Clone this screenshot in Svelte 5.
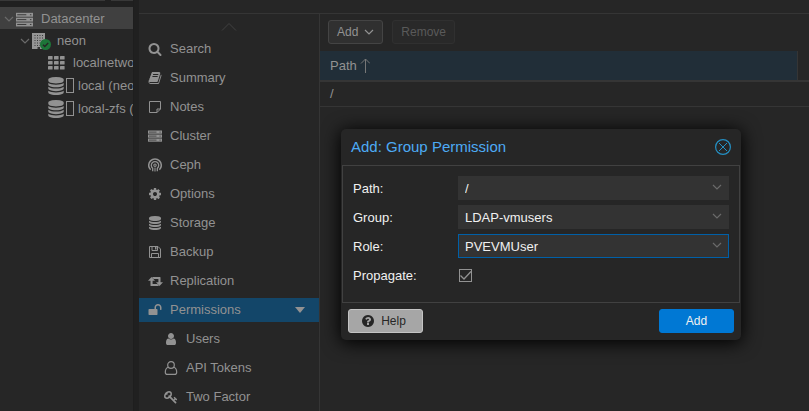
<script>
  const DB =
    'M896 768q237 0 443-43t325-127v170q0 69-103 128t-280 93.5-385 34.5-385-34.5-280-93.5-103-128v-170q119 84 325 127t443 43zm0 768q237 0 443-43t325-127v170q0 69-103 128t-280 93.5-385 34.5-385-34.5-280-93.5-103-128v-170q119 84 325 127t443 43zm0-384q237 0 443-43t325-127v170q0 69-103 128t-280 93.5-385 34.5-385-34.5-280-93.5-103-128v-170q119 84 325 127t443 43zm0-1152q208 0 385 34.5t280 93.5 103 128v128q0 69-103 128t-280 93.5-385 34.5-385-34.5-280-93.5-103-128v-128q0-69 103-128t280-93.5 385-34.5z';

  const solid = {
    search:
      'M1216 832q0-185-131.5-316.5t-316.5-131.5-316.5 131.5-131.5 316.5 131.5 316.5 316.5 131.5 316.5-131.5 131.5-316.5zm512 832q0 52-38 90t-90 38q-54 0-90-38l-343-342q-179 124-399 124-143 0-273.5-55.5t-225-150-150-225-55.5-273.5 55.5-273.5 150-225 225-150 273.5-55.5 273.5 55.5 225 150 150 225 55.5 273.5q0 220-124 399l343 343q37 37 37 90z',
    book:
      'M1703 478q40 57 18 129l-275 906q-19 64-76.5 107.5t-122.5 43.5h-923q-77 0-148.5-53.5t-99.5-131.5q-24-67-2-127 0-4 3-27t4-37q1-8-3-21.5t-3-19.5q2-11 8-21t16.5-23.5 16.5-23.5q23-38 45-91.5t30-91.5q3-10 .5-30t-.5-28q3-11 17-28t17-23q21-36 42-92t25-90q1-9-2.5-32t.5-28q4-13 22-30.5t22-22.5q19-26 42.5-84.5t27.5-96.5q1-8-3-25.5t-2-26.5q2-8 9-18t18-23 17-21q8-12 16.5-30.5t15-35 16-36 19.5-32 26.5-23.5 36-11.5 47.5 5.5l-1 3q38-9 51-9h761q74 0 114 56t18 130l-274 906q-36 119-71.5 153.5t-128.5 34.5h-869q-27 0-38 15-11 16-1 43 24 70 144 70h923q29 0 56-15.5t35-41.5l300-987q7-22 5-57 38 15 59 43zm-1064 2q-4 13 2 22.5t20 9.5h608q13 0 25.5-9.5t16.5-22.5l21-64q4-13-2-22.5t-20-9.5h-608q-13 0-25.5 9.5t-16.5 22.5zm-83 256q-4 13 2 22.5t20 9.5h608q13 0 25.5-9.5t16.5-22.5l21-64q4-13-2-22.5t-20-9.5h-608q-13 0-25.5 9.5t-16.5 22.5z',
    cog:
      'M1152 896q0-106-75-181t-181-75-181 75-75 181 75 181 181 75 181-75 75-181zm512-109v222q0 12-8 23t-20 13l-185 28q-19 54-39 91 35 50 107 138 10 12 10 25t-9 23q-27 37-99 108t-94 71q-12 0-26-9l-138-108q-44 23-91 38-16 136-29 186-7 28-36 28h-222q-14 0-24.5-8.5t-11.5-21.5l-28-184q-49-16-90-37l-141 107q-10 9-25 9-14 0-25-11-126-114-165-168-7-10-7-23 0-12 8-23 15-21 51-66.5t54-70.5q-27-50-41-99l-183-27q-13-2-21-12.5t-8-23.5v-222q0-12 8-23t19-13l186-28q14-46 39-92-40-57-107-138-10-12-10-24 0-10 9-23 26-36 98.5-107.5t94.5-71.5q13 0 26 10l138 107q44-23 91-38 16-136 29-186 7-28 36-28h222q14 0 24.5 8.500t11.500 21.500l28 184q49 16 90 37l142-107q9-9 24-9 13 0 25 10 129 119 165 170 7 8 7 22 0 12-8 23-15 21-51 66.500t-54 70.500q26 50 41 98l183 28q13 2 21 12.500t8 23.500z',
    database: DB,
    unlock:
      'M1728 576v256q0 26-19 45t-45 19h-64q-26 0-45-19t-19-45v-256q0-106-75-181t-181-75-181 75-75 181v192h96q40 0 68 28t28 68v576q0 40-28 68t-68 28h-960q-40 0-68-28t-28-68v-576q0-40 28-68t68-28h672v-192q0-185 131.5-316.5t316.5-131.5 316.5 131.5 131.5 316.5z',
    user:
      'M1536 1399q0 109-62.5 187t-150.5 78h-854q-88 0-150.5-78t-62.5-187q0-85 8.5-160.5t31.5-152 58.5-131 94-89 134.5-34.5q131 128 313 128t313-128q76 0 134.5 34.5t94 89 58.5 131 31.5 152 8.5 160.5zm-256-887q0 159-112.5 271.5t-271.5 112.5-271.5-112.5-112.5-271.5 112.5-271.5 271.5-112.5 271.5 112.5 112.5 271.5z',
    key:
      'M832 512q0-80-56-136t-136-56-136 56-56 136q0 42 19 83-41-19-83-19-80 0-136 56t-56 136 56 136 136 56 136-56 56-136q0-42-19-83 41 19 83 19 80 0 136-56t56-136zm851 704q0 17-49 66t-66 49q-9 0-28.5-16t-36.5-33-38.5-40-24.5-26l-96 96 220 220q28 28 28 68 0 42-39 81t-81 39q-40 0-68-28l-671-671q-176 131-365 131-163 0-265.5-102.5t-102.5-265.5q0-160 95-313t248-248 313-95q163 0 265.5 102.5t102.5 265.5q0 189-131 365l355 355 96-96q-3-3-26-24.5t-40-38.5-33-36.5-16-28.5q0-17 49-66t66-49q13 0 23 10 6 6 46 44.5t82 79.5 86.5 86 73 78 28.5 41z',
    help:
      'M1024 1376v-192q0-14-9-23t-23-9h-192q-14 0-23 9t-9 23v192q0 14 9 23t23 9h192q14 0 23-9t9-23zm256-672q0-88-55.5-163t-138.5-116-170-41q-243 0-371 213-15 24 8 42l132 100q7 6 19 6 16 0 25-12 53-68 86-92 34-24 86-24 48 0 85.5 26t37.5 59q0 38-20 61t-68 45q-63 28-115.5 86.5t-52.5 125.5v36q0 14 9 23t23 9h192q14 0 23-9t9-23q0-19 21.5-49.5t54.5-49.5q32-18 49-28.5t46-35 44.5-48 28-60.5 12.5-81zm384 192q0 209-103 385.5t-279.5 279.5-385.5 103-385.5-103-279.5-279.5-103-385.5 103-385.5 279.5-279.5 385.5-103 385.5 103 279.5 279.5 103 385.5z'
  };

  const tree = [
    { label: 'Datacenter', level: 0, icon: 'server', open: true, selected: true },
    { label: 'neon', level: 1, icon: 'node', open: true },
    { label: 'localnetwork', level: 2, icon: 'grid' },
    { label: 'local (neon)', level: 2, icon: 'database', usage: true },
    { label: 'local-zfs (neon)', level: 2, icon: 'database', usage: true }
  ];

  const menu = [
    { label: 'Search', icon: 'search' },
    { label: 'Summary', icon: 'book' },
    { label: 'Notes', icon: 'note' },
    { label: 'Cluster', icon: 'server' },
    { label: 'Ceph', icon: 'ceph' },
    { label: 'Options', icon: 'cog' },
    { label: 'Storage', icon: 'database' },
    { label: 'Backup', icon: 'floppy' },
    { label: 'Replication', icon: 'retweet' },
    { label: 'Permissions', icon: 'unlock', active: true },
    { label: 'Users', icon: 'user', sub: true },
    { label: 'API Tokens', icon: 'userOutline', sub: true },
    { label: 'Two Factor', icon: 'key', sub: true }
  ];

  const fields = [
    { id: 'path', label: 'Path:', value: '/' },
    { id: 'group', label: 'Group:', value: 'LDAP-vmusers' },
    { id: 'role', label: 'Role:', value: 'PVEVMUser', focused: true }
  ];

  let propagate = $state(true);
</script>

{#snippet icon(name, size)}
  {#if solid[name]}
    <svg width={size} height={size} viewBox="0 0 1792 1792" fill="currentColor" aria-hidden="true"><path d={solid[name]} /></svg>
  {:else if name === 'server'}
    <svg width={size} height={size} viewBox="0 0 14 14" aria-hidden="true">
      {#each [1.5, 5.5, 9.5] as y}
        <rect x="0" {y} width="14" height="3.2" fill="currentColor" />
        <path d="M1 {y + 1.6}h7.500M11.500 {y + 1.6}h1.200" stroke="#383838" stroke-width="0.800" />
      {/each}
    </svg>
  {:else if name === 'grid'}
    <svg width={size} height={size} viewBox="0 0 18 18" fill="currentColor" aria-hidden="true">
      {#each [2, 7, 12] as y}
        {#each [1, 7, 13] as x}
          <rect {x} {y} width="4.6" height="3.6" rx=".6" />
        {/each}
      {/each}
    </svg>
  {:else if name === 'node'}
    <svg width={size} height={size} viewBox="0 0 18 18" aria-hidden="true">
      <path d="M1 1h13v16H1z" fill="#959595" />
      <path d="M3.500 3.500h9M3.500 6h9M3.500 8.500h9M3.500 11h9M3.500 13.500h9" stroke="#3a3a3a" stroke-dasharray="1 1.500" />
      <path d="M6.500 15h2.500v2h-2.500z" fill="#333" />
    </svg>
  {:else if name === 'note'}
    <svg width={size} height={size} viewBox="0 0 14 14" fill="none" stroke="currentColor" aria-hidden="true">
      <path d="M1.500 1.500h11v7.500l-3.500 3.500h-7.500zM12.500 9h-3.500v3.500" />
    </svg>
  {:else if name === 'ceph'}
    <svg width={size} height={size} viewBox="0 0 14 14" fill="none" stroke="currentColor" stroke-width="1.500" aria-hidden="true">
      <path d="M2.600 11.800A6.300 6.300 0 1 1 11.400 11.800" />
      <path d="M4.700 13.300V10.200A3.700 3.700 0 1 1 9.300 10.200V13.300" stroke-width="1.300" />
      <circle cx="7" cy="7.200" r="1.200" stroke-width="1.100" />
      <path d="M7 9.500V13.500" stroke-width="1.100" />
    </svg>
  {:else if name === 'floppy'}
    <svg width={size} height={size} viewBox="0 0 14 14" fill="none" stroke="currentColor" aria-hidden="true">
      <path d="M1.500 1.500h8.500l2.500 2.500v8.500h-11zM4 1.500v4h5.500v-4M3.500 12.500v-4h7v4" />
      <path d="M7 2h1.500v2.500H7z" fill="currentColor" stroke="none" />
    </svg>
  {:else if name === 'retweet'}
    <svg width={size} height={size} viewBox="0 0 15 15" fill="currentColor" aria-hidden="true">
      <path d="M3.500 3L7 6.800H4.600V10H9.300L11 12H3Q2.500 12 2.500 11.400V6.800H0zM11.500 12L8 8.200H10.400V5H5.700L4 3H12Q12.500 3 12.500 3.600V8.200H15z" />
    </svg>
  {:else if name === 'userOutline'}
    <svg width={size} height={size} viewBox="0 0 14 14" fill="none" stroke="currentColor" stroke-width="1.200" aria-hidden="true">
      <circle cx="7" cy="4" r="3.300" />
      <path d="M4.200 6.300C2 7 1.300 9 1.300 11.200Q1.300 13.400 3.300 13.400H10.700Q12.700 13.400 12.700 11.200C12.700 9 12 7 9.800 6.300" />
    </svg>
  {/if}
{/snippet}

{#snippet chevron(width)}
  <svg class="chevron" {width} height="6" viewBox="0 0 10 6" fill="none" stroke="currentColor" stroke-width="1.200" aria-hidden="true"><path d="M1 1l4 4 4-4" /></svg>
{/snippet}

<div class="app">
  <aside class="resources">
    <div class="view-bar"><span class="view-select"></span><span class="view-gear"></span></div>
    <div class="tree" role="tree">
      {#each tree as row}
        <div class="node level{row.level}" class:selected={row.selected} class:usage={row.usage} role="treeitem" aria-selected={!!row.selected} tabindex="-1">
          <span class="expander">{#if row.open}{@render chevron(10)}{/if}</span>
          <span class="node-icon">
            {@render icon(row.icon, row.icon === 'server' ? 17 : 18)}
            {#if row.icon === 'node'}
              <svg class="badge" width="11" height="11" viewBox="0 0 11 11" aria-hidden="true">
                <circle cx="5.500" cy="5.500" r="5.500" fill="#1d7538" />
                <path d="M3 5.700l1.800 1.800L8.200 4" fill="none" stroke="#262626" stroke-width="1.500" />
              </svg>
            {/if}
          </span>
          {#if row.usage}<span class="meter"></span>{/if}
          <span class="node-label">{row.label}</span>
        </div>
      {/each}
    </div>
  </aside>

  <main class="content">
    <nav class="menu" aria-label="Datacenter">
      <div class="scroll-up">
        <svg width="16" height="9" viewBox="0 0 16 9" fill="none" stroke="#404040" aria-hidden="true"><path d="M1 8.500l7-7 7 7" /></svg>
      </div>
      {#each menu as item}
        <a href="#{item.icon}" class:active={item.active} class:sub={item.sub}>
          <span class="menu-icon">{@render icon(item.icon, item.icon === 'retweet' ? 15 : 14)}</span>
          <span>{item.label}</span>
          {#if item.active}<span class="caret"></span>{/if}
        </a>
      {/each}
    </nav>

    <section class="panel">
      <div class="toolbar">
        <button type="button" class="tool">Add {@render chevron(10)}</button>
        <button type="button" class="tool" disabled>Remove</button>
      </div>
      <table>
        <thead>
          <tr>
            <th aria-sort="ascending">
              <span class="sort">Path
                <svg width="10" height="15" viewBox="0 0 10 15" fill="none" stroke="#777" aria-hidden="true"><path d="M5.500 15V1M1 5.500l4.500-4.500L10 5.500" /></svg>
              </span>
            </th>
            <td class="filler"></td>
          </tr>
        </thead>
        <tbody>
          <tr><td colspan="2">/</td></tr>
        </tbody>
      </table>
    </section>
  </main>

  <div class="dialog" role="dialog" aria-labelledby="dialog-title">
    <header>
      <h1 id="dialog-title">Add: Group Permission</h1>
      <button type="button" class="close" aria-label="Close">
        <svg width="16" height="16" viewBox="0 0 16 16" fill="none" stroke="currentColor" aria-hidden="true">
          <circle cx="8" cy="8" r="7.400" stroke-width="1.200" />
          <path d="M4 4l8 8M12 4l-8 8" />
        </svg>
      </button>
    </header>
    <form>
      {#each fields as field}
        <div class="field">
          <label for={field.id}>{field.label}</label>
          <div class="combo" class:focused={field.focused}>
            <select id={field.id}><option>{field.value}</option></select>
            {@render chevron(10)}
          </div>
        </div>
      {/each}
      <div class="field">
        <label for="propagate">Propagate:</label>
        <span class="check">
          <input type="checkbox" id="propagate" bind:checked={propagate} />
          {#if propagate}
            <svg width="13" height="13" viewBox="0 0 13 13" fill="none" stroke="#929292" stroke-width="1.300" aria-hidden="true"><path d="M1.500 6.500l3.500 3.500 7-7.500" /></svg>
          {/if}
        </span>
      </div>
    </form>
    <footer>
      <button type="button" class="help">{@render icon('help', 14)} Help</button>
      <button type="button" class="submit">Add</button>
    </footer>
  </div>
</div>

<style>
  :global(body) {
    background: #262626;
  }
  .app,
  .app :global(*) {
    box-sizing: border-box;
  }
  .app {
    display: flex;
    height: 100vh;
    overflow: hidden;
    background: #202020;
    color: #929292;
    font: 13px/16px 'Liberation Sans', Arial, sans-serif;
  }
  svg {
    display: block;
    flex: none;
  }
  button,
  select {
    font: inherit;
    color: inherit;
  }

  .resources {
    flex: none;
    width: 134px;
    margin-right: 5px;
    background: #262626;
    border-right: 1px solid #1e1e1e;
    overflow: hidden;
  }
  .view-bar {
    display: flex;
    gap: 6px;
    height: 7px;
    background: #202020;
  }
  .view-bar span {
    height: 1px;
    background: #383838;
  }
  .view-select {
    width: 105px;
  }
  .view-gear {
    flex: 1;
  }
  .node {
    display: flex;
    align-items: center;
    height: 22px;
    padding: 2px 0 0 4px;
    white-space: nowrap;
  }
  .node.level1 {
    padding-left: 20px;
  }
  .node.level2 {
    padding-left: 36px;
  }
  .node.selected {
    background: #404040;
  }
  .node.usage {
    height: 23px;
  }
  .expander {
    flex: none;
    width: 11px;
    color: #6a6a6a;
  }
  .node-icon {
    position: relative;
    display: flex;
    flex: none;
    justify-content: center;
    width: 18px;
    margin-right: 8px;
  }
  .usage .node-icon {
    margin-right: 1px;
  }
  .badge {
    position: absolute;
    right: -2px;
    bottom: 0;
  }
  .meter {
    flex: none;
    width: 8px;
    height: 15px;
    margin-right: 4px;
    border: 1px solid #929292;
  }

  .content {
    display: flex;
    flex: 1;
    min-width: 0;
    margin-top: 13px;
    border-top: 1px solid #353535;
    background: #262626;
    box-shadow: 0 -13px #262626;
  }
  .menu {
    display: flex;
    flex: none;
    flex-direction: column;
    gap: 5px;
    width: 181px;
    border-right: 1px solid #353535;
  }
  .scroll-up {
    display: flex;
    flex: none;
    align-items: center;
    justify-content: center;
    height: 18px;
    padding-top: 6px;
  }
  .menu a {
    display: flex;
    flex: none;
    align-items: center;
    height: 24px;
    padding: 0 14px 0 8px;
    color: inherit;
    text-decoration: none;
  }
  .menu a.sub {
    padding-left: 24px;
  }
  .menu a.active {
    background: #134669;
  }
  .menu-icon {
    display: flex;
    justify-content: center;
    width: 16px;
    margin-right: 7px;
  }
  .caret {
    margin-left: auto;
    border: 5px solid transparent;
    border-top: 6px solid #929292;
    border-bottom: 0;
  }

  .panel {
    flex: 1;
    min-width: 0;
  }
  .toolbar {
    display: flex;
    gap: 9px;
    height: 37px;
    padding: 6px 8px;
  }
  .tool {
    display: flex;
    align-items: center;
    gap: 6px;
    height: 24px;
    padding: 0 8px;
    border: 1px solid #444;
    border-radius: 3px;
    background: #303030;
    font-size: 12px;
  }
  .tool:disabled {
    border-color: #303030;
    background: #292929;
    color: #5a5a5a;
  }
  table {
    width: 100%;
    border-collapse: collapse;
  }
  th,
  td {
    height: 25px;
    padding: 0 10px;
    border-bottom: 1px solid #353535;
    text-align: left;
    font-weight: normal;
  }
  th {
    height: 30px;
    border-right: 1px solid #353535;
    border-bottom-width: 2px;
    background: #212e38;
  }
  td.filler {
    width: 12px;
    padding: 0;
    border-bottom-width: 2px;
  }
  .sort {
    display: flex;
    align-items: center;
    gap: 3px;
  }

  .dialog {
    position: absolute;
    left: 341px;
    top: 129px;
    width: 400px;
    padding: 0 1px;
    border-radius: 5px;
    background: #262626;
    box-shadow: 0 2px 18px 1px #000;
    color: #f0f0f0;
  }
  header {
    display: flex;
    align-items: center;
    justify-content: space-between;
    height: 36px;
    padding: 0 9px;
  }
  h1 {
    margin: 0;
    color: #4dabf5;
    font-size: 15px;
    font-weight: normal;
  }
  .close {
    padding: 0;
    border: 0;
    background: none;
    color: #2590c4;
  }
  form {
    display: flex;
    flex-direction: column;
    gap: 5px;
    padding: 10px 10px 15px;
    border: 1px solid #414141;
  }
  .field {
    display: flex;
    align-items: center;
    height: 24px;
  }
  label {
    flex: none;
    width: 105px;
    padding-top: 2px;
  }
  .combo {
    position: relative;
    flex: 1;
  }
  .combo select {
    display: block;
    width: 100%;
    height: 24px;
    padding: 2px 24px 0 6px;
    border: 1px solid #333;
    border-radius: 0;
    outline: 0;
    background: #333;
    appearance: none;
  }
  .combo.focused select {
    border-color: #0060a8;
  }
  .combo .chevron {
    position: absolute;
    right: 7px;
    top: 8px;
    color: #6a6a6a;
    pointer-events: none;
  }
  .check {
    position: relative;
    margin-left: 1px;
  }
  .check input {
    display: block;
    width: 13px;
    height: 13px;
    margin: 0;
    border: 1px solid #929292;
    appearance: none;
  }
  .check svg {
    position: absolute;
    inset: 0;
    pointer-events: none;
  }
  footer {
    display: flex;
    justify-content: space-between;
    padding: 6px 6px 7px;
  }
  footer button {
    display: flex;
    align-items: center;
    justify-content: center;
    gap: 6px;
    width: 75px;
    height: 24px;
    padding: 0;
    border: 1px solid #0078d4;
    border-radius: 3px;
    background: #0078d4;
    font-size: 12px;
  }
  footer .help {
    padding-right: 4px;
    border-color: #c4c4c4;
    background: #a6a6a6;
    color: #262626;
  }
</style>
